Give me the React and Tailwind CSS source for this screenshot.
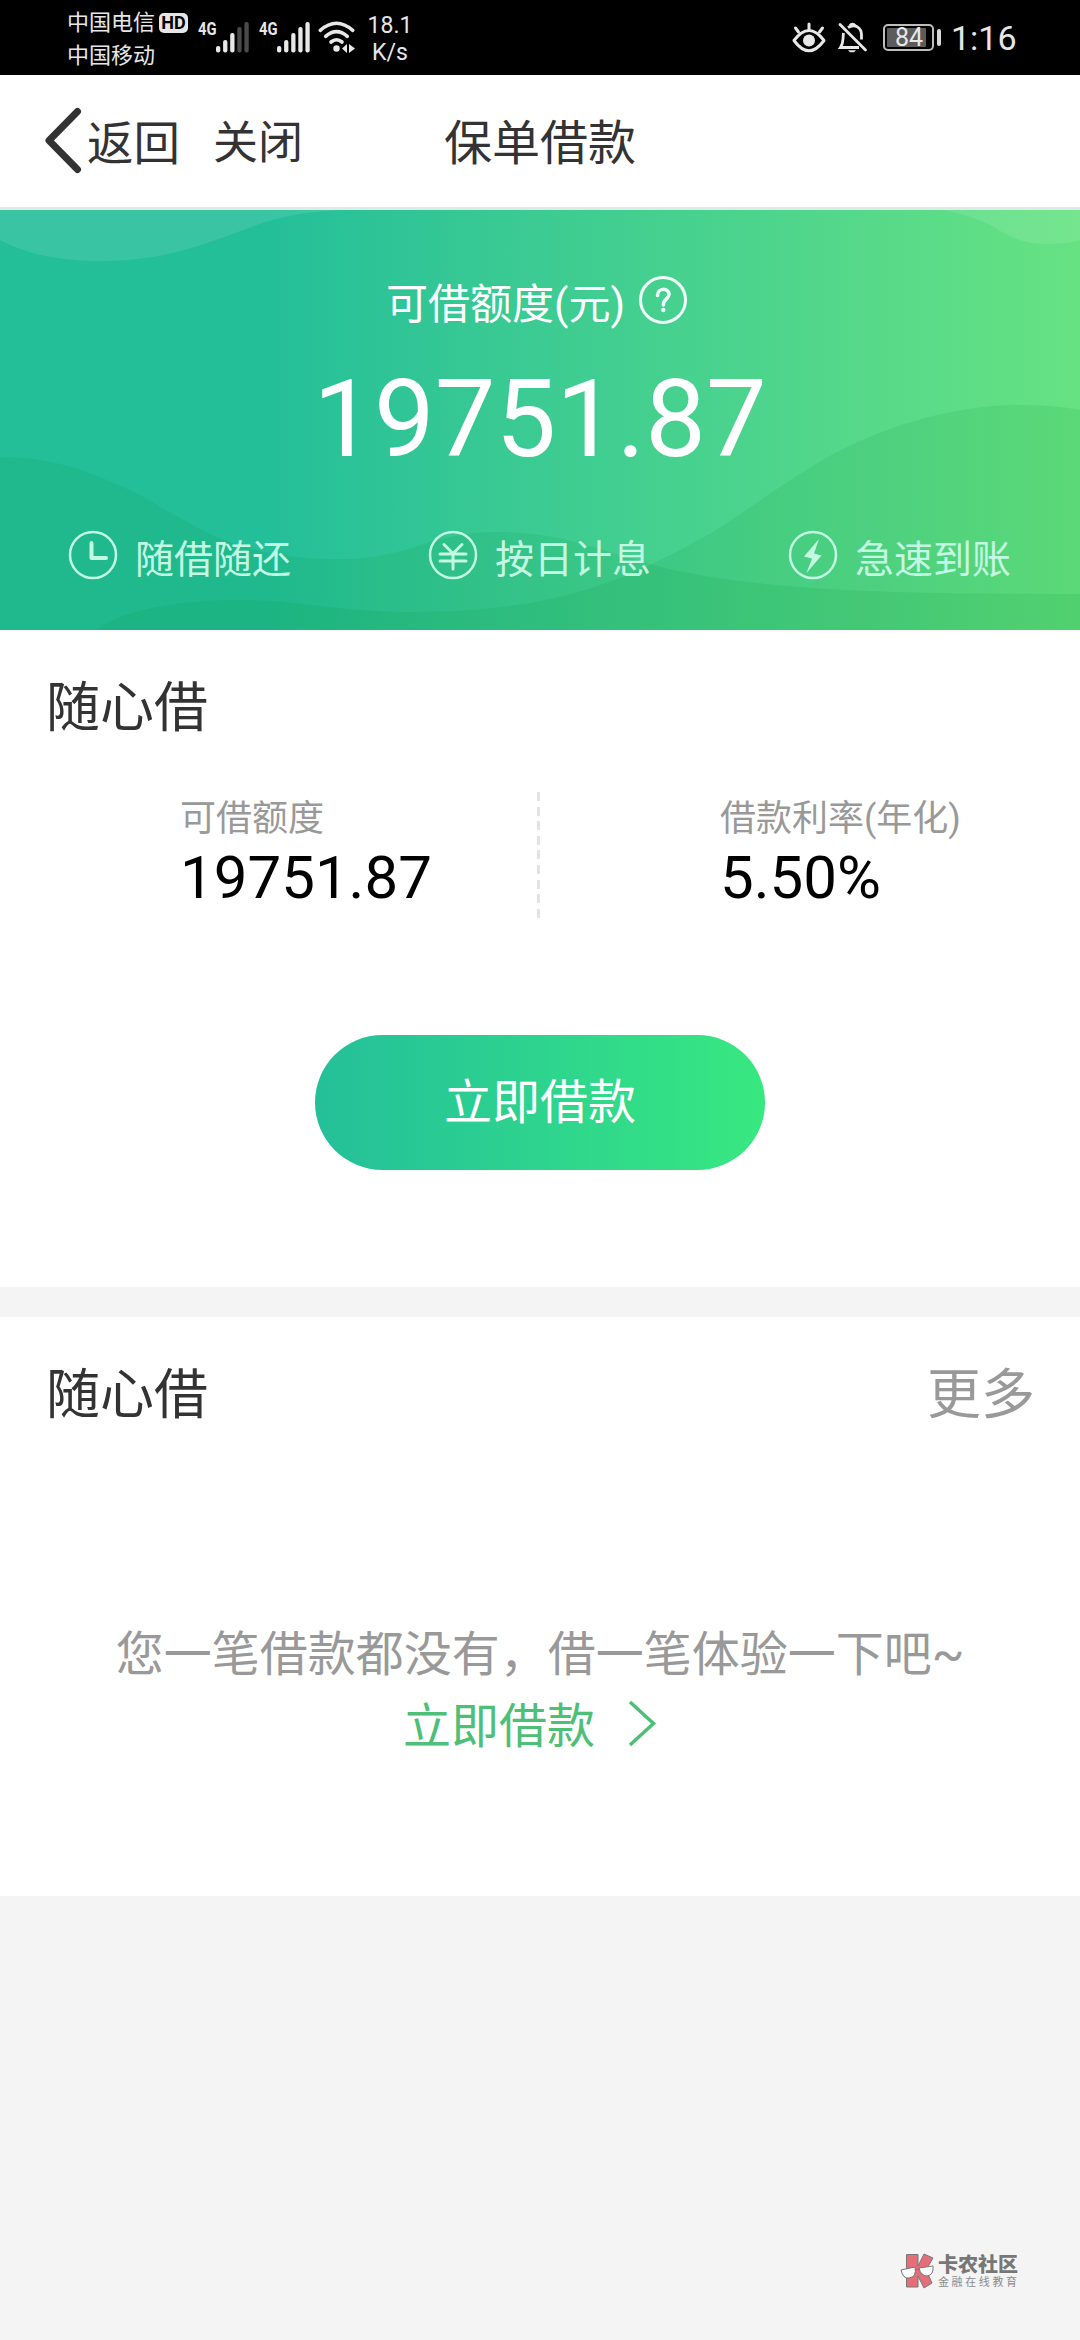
import React from 'react';

function SignalBars({ active }) {
  const tops = [24, 18, 11, 5, 0];
  return (
    <svg className="mt-[22px] h-[31px] w-[33px] shrink-0" viewBox="0 0 33 31">
      {tops.map((t, i) => (
        <rect key={t} x={i * 7.1} y={t} width="4.3" height={30.5 - t} rx="2" fill={i < active ? '#e8e8e8' : '#4a4a4a'} />
      ))}
    </svg>
  );
}

function StatusBar() {
  return (
    <div className="flex h-[75px] items-start bg-black pl-[67px] text-[#e6e6e6]">
      <div className="w-[88px] shrink-0 pt-[7px] text-[22px] leading-[32.5px] whitespace-nowrap">
        <div>中国电信</div>
        <div>中国移动</div>
      </div>
      <div className="mt-[13px] ml-[4px] flex h-[20px] w-[29px] shrink-0 items-center justify-center rounded-[5px] bg-[#e6e6e6] text-[18px] leading-[20px] font-bold text-black">
        HD
      </div>
      <div className="mt-[19px] ml-[10px] w-[18px] shrink-0">
        <div className="origin-left scale-x-[0.82] text-[18px] leading-[20px] font-bold">4G</div>
      </div>
      <SignalBars active={3} />
      <div className="mt-[19px] ml-[10px] w-[18px] shrink-0">
        <div className="origin-left scale-x-[0.82] text-[18px] leading-[20px] font-bold">4G</div>
      </div>
      <SignalBars active={5} />
      <svg className="mt-[21px] ml-[8px] h-[32px] w-[38px] shrink-0" viewBox="0 0 38 32" fill="none" stroke="#e8e8e8" strokeWidth="3.6" strokeLinecap="round">
        <path d="M2.3 9.3Q18.500-4.800 34.700 9.300" />
        <path d="M7.700 15.300Q18.500 6 29.300 15.300" />
        <path d="M13 21Q18.500 16.500 24 21" />
        <circle cx="18.500" cy="27.500" r="3.200" fill="#e8e8e8" stroke="none" />
        <path d="M29 23v9l-5-4.500zM31 23v9l6-4.500z" fill="#e8e8e8" stroke="none" />
      </svg>
      <div className="mt-[12px] ml-[9px] w-[50px] shrink-0 text-center text-[23px] leading-[27px]">
        <div>18.1</div>
        <div>K/s</div>
      </div>
      <svg className="mt-[22px] ml-[377px] h-[31px] w-[34px] shrink-0" viewBox="0 0 34 31" fill="none" stroke="#e8e8e8" strokeWidth="3" strokeLinecap="round">
        <path d="M2 18.500Q17-1.500 32 18.500Q17 39 2 18.500Z" strokeLinejoin="round" />
        <circle cx="17" cy="18.500" r="6" fill="#e8e8e8" stroke="none" />
        <path d="M17 2v5M3.500 6l3 4M30.500 6l-3 4" />
      </svg>
      <svg className="mt-[22px] ml-[12px] h-[31px] w-[30px] shrink-0" viewBox="0 0 30 31" fill="none" stroke="#e8e8e8" strokeWidth="2.800">
        <path d="M2 2.500L27.500 28" strokeLinecap="round" />
        <path d="M5.500 11C4.500 18 6 20 2.500 25.500H21" />
        <path d="M10 5.500C17 1 23.500 6 23.500 13V17.500" />
        <path d="M12 3.500a3 3 0 0 1 5 0" />
        <path d="M10 28.300h8l-2 2h-4z" fill="#e8e8e8" stroke="none" />
      </svg>
      <div className="mt-[24px] ml-[15px] flex h-[27px] w-[51px] shrink-0 rounded-[5px] border-2 border-[#bdbdbd] p-[2px]">
        <div className="flex h-full w-[39px] items-center justify-center rounded-[1px] bg-[#5c5c5c] pl-[5px] text-[25px] leading-none text-[#e8e8e8]">84</div>
      </div>
      <div className="mt-[29px] ml-[3px] h-[17px] w-[4px] shrink-0 rounded-[2px] bg-[#d8d8d8]" />
      <div className="mt-[18px] ml-[10px] text-[34px] leading-[40px]">1:16</div>
    </div>
  );
}

function NavBar() {
  return (
    <header className="grid h-[135px] grid-cols-3 items-center border-b-[3px] border-[#dcebe5] bg-white text-[48px] leading-[60px] text-[#333]">
      <div className="flex items-center pl-[44px] whitespace-nowrap">
        <svg className="h-[68px] w-[38px]" viewBox="0 0 38 68" fill="none" stroke="#333" strokeWidth="7" strokeLinecap="round" strokeLinejoin="round">
          <path d="M33.500 4.500L5 33.500L33.500 62.500" />
        </svg>
        <span className="mt-[6px] ml-[5px] text-[46.500px]">返回</span>
        <span className="mt-[6px] ml-[33px] text-[45px]">关闭</span>
      </div>
      <h1 className="mt-[6px] text-center">保单借款</h1>
    </header>
  );
}

function HeroWaves() {
  return (
    <svg className="absolute inset-0 h-full w-full" viewBox="0 0 1080 420" preserveAspectRatio="none">
      <g fill="#fff" fillOpacity="0.1">
        <path d="M0 0V30C30 46 65 51 102 51C160 51 200 36 238 22C270 9 300 1 348 0Z" />
        <path d="M943 0C965 4 978 9 992 16C1015 31 1030 34 1047 34C1060 34 1070 33 1080 30V0Z" />
      </g>
      <g fill="#008723" fillOpacity="0.1">
        <path d="M0 247C60 247 100 266 138 284C200 318 235 349 341 349C410 349 430 322 496 322C560 322 590 337 647 353C740 380 880 384 1080 384V420H0Z" />
        <path d="M1080 200C1060 196 1040 195 1019 195C950 195 880 218 826 248C760 287 730 315 689 335C600 385 520 402 413 402C340 402 300 390 241 390C170 390 120 402 96 420H1080Z" />
      </g>
    </svg>
  );
}

function CircleIcon({ children }) {
  return (
    <svg className="h-[50px] w-[50px] shrink-0" viewBox="0 0 50 50" fill="none" stroke="#c3f8e2" strokeWidth="2.500" strokeLinecap="round" strokeLinejoin="round">
      <circle cx="25" cy="25" r="23" />
      {children}
    </svg>
  );
}

function Feature({ icon, label }) {
  return (
    <div className="flex items-center pl-[68px] whitespace-nowrap">
      <CircleIcon>{icon}</CircleIcon>
      <span className="mt-[10px] ml-[17px] text-[39px] leading-[48px] text-[#c3f8e2]">{label}</span>
    </div>
  );
}

function Hero() {
  return (
    <section className="relative h-[420px] bg-linear-to-r from-[#23bf99] from-25% via-[#48d28e] via-65% to-[#66e282] text-white">
      <HeroWaves />
      <div className="relative flex h-full flex-col">
        <div className="mt-[62px] flex h-[56px] items-center justify-center pr-[6px]">
          <span className="mt-[9px] text-[42px] leading-[50px]">可借额度(元)</span>
          <svg className="ml-[13px] h-[50px] w-[50px]" viewBox="0 0 50 50" fill="none" stroke="#effffa" strokeWidth="3">
            <circle cx="25" cy="25" r="22.500" />
            <path d="M19.500 20.500C19.500 12.500 31 12.500 31 19.500C31 24 25.300 24 25.300 30" strokeWidth="3.500" strokeLinecap="round" />
            <circle cx="25.300" cy="35" r="2.200" fill="#effffa" stroke="none" />
          </svg>
        </div>
        <div className="mt-[28px] text-center text-[108px] leading-[126px]">19751.87</div>
        <div className="mt-[44px] grid grid-cols-3">
          <Feature label="随借随还" icon={<path d="M23.500 13V28H38" strokeWidth="4" />} />
          <Feature label="按日计息" icon={<path d="M16 14.500L25 23.500L34 14.500M25 23.500V39M12 24H38M12 31H38" strokeWidth="3" />} />
          <Feature label="急速到账" icon={<path d="M31 9L16 26.500L24 28.500L18.500 43L33.500 25.500L26 23.500Z" fill="#c3f8e2" stroke="none" />} />
        </div>
      </div>
    </section>
  );
}

function Metric({ label, value }) {
  return (
    <div className="pl-[180px] whitespace-nowrap">
      <div className="pt-px text-[36px] leading-[53px] text-[#999]">{label}</div>
      <div className="text-[60px] leading-[64px] text-black">{value}</div>
    </div>
  );
}

function LoanCard() {
  return (
    <section className="flex h-[657px] flex-col items-center bg-white">
      <h2 className="w-full pt-[44px] pl-[46px] text-[54px] leading-[70px] text-[#333]">随心借</h2>
      <div className="relative mt-[48px] grid h-[127px] w-full grid-cols-2">
        <Metric label="可借额度" value="19751.87" />
        <Metric label="借款利率(年化)" value="5.50%" />
        <div className="absolute top-0 left-[537px] h-[126px] w-[3px] bg-[repeating-linear-gradient(to_bottom,#e3e3e3_0_9px,transparent_9px_14.6px)]" />
      </div>
      <button className="mt-[116px] h-[135px] w-[450px] rounded-full bg-linear-to-r from-[#24bf99] to-[#38e87f] pt-px text-[48px] leading-[60px] text-white">
        立即借款
      </button>
    </section>
  );
}

function RecordsCard() {
  return (
    <section className="mt-[30px] flex h-[579px] flex-col bg-white">
      <div className="flex justify-between pt-[44px] pr-[45px] pl-[46px] text-[54px] leading-[70px]">
        <h2 className="text-[#333]">随心借</h2>
        <span className="text-[#999]">更多</span>
      </div>
      <p className="mt-[188px] text-center text-[48px] leading-[72px] text-[#999]">您一笔借款都没有，借一笔体验一下吧~</p>
      <a className="flex items-center pl-[403px] text-[48px] leading-[72px] text-[#4dbf76]">
        立即借款
        <svg className="mb-[7px] ml-[32px] h-[50px] w-[32px]" viewBox="0 0 32 50" fill="none" stroke="#4dbf76" strokeWidth="3.500">
          <path d="M3 3L26.500 24.500L3 46" />
        </svg>
      </a>
    </section>
  );
}

function Watermark() {
  return (
    <footer className="mt-auto flex justify-end pr-[60px] pb-[50px]">
      <svg className="mt-[1px] h-[37px] w-[36px]" viewBox="0 0 36 37" stroke="#777" strokeWidth="1">
        <path d="M6.500 1.500H18V13L24 1L33 5L26 17L32 30L24 35L18 23V34H6.500Z" fill="#e66e78" />
        <path d="M1 17L15 14Q17 24 9 25Q3 26 1 17ZM19 15L33 13Q34 22 27 23Q21 23 19 15ZM15 17L19 16" fill="#fff" />
      </svg>
      <div className="ml-[2px] w-[82px] whitespace-nowrap">
        <div className="pt-px text-[20px] leading-[24px] font-black text-[#777]">卡农社区</div>
        <div className="text-[11px] leading-[12px] tracking-[2.600px] text-[#8c8c8c]">金融在线教育</div>
      </div>
    </footer>
  );
}

export default function App() {
  return (
    <main className="flex h-[2340px] w-[1080px] flex-col overflow-hidden bg-[#f4f4f4] font-[Roboto,'Noto_Sans_CJK_SC',sans-serif]">
      <StatusBar />
      <NavBar />
      <Hero />
      <LoanCard />
      <RecordsCard />
      <Watermark />
    </main>
  );
}
